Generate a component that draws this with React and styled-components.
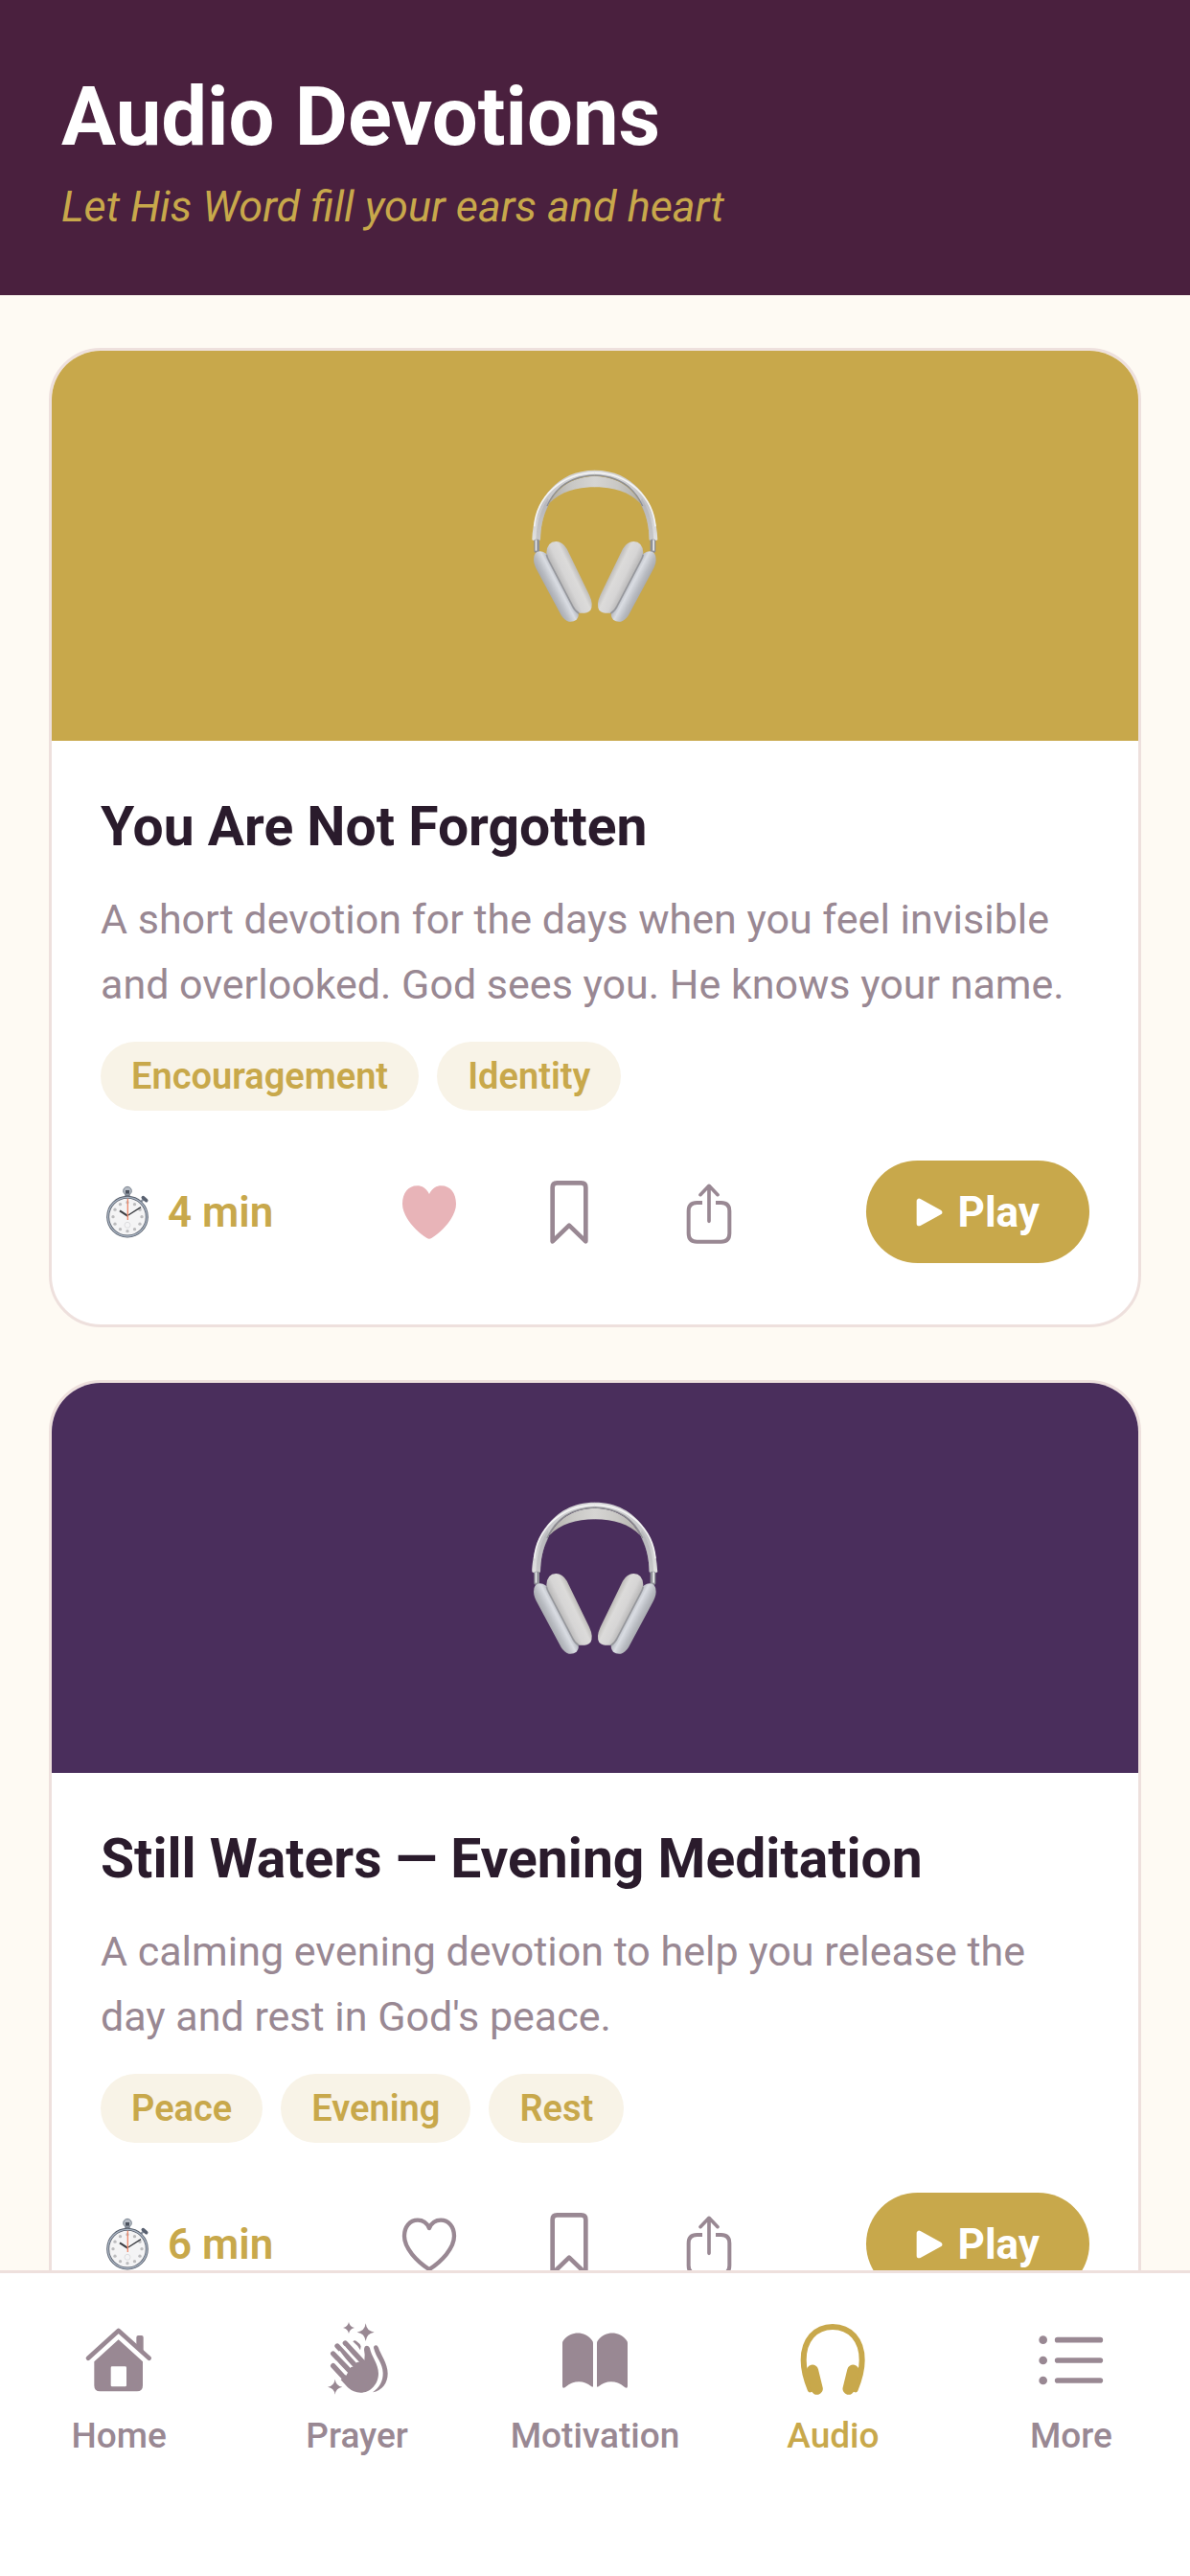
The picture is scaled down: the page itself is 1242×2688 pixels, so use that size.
import React, { useState } from "react";
import styled, { createGlobalStyle } from "styled-components";

const color = {
  plum: "#4a203e",
  gold: "#c8a84b",
  violet: "#4a2e5c",
  cream: "#fefaf3",
  ink: "#2a1b2c",
  muted: "#998893",
  line: "#eee0dd",
  chip: "#f8f3e7",
  rose: "#e8b4b8",
};

const GlobalStyle = createGlobalStyle`
  * { box-sizing: border-box; }
  body { margin: 0; background: ${color.cream}; }
  button { font: inherit; border: 0; padding: 0; background: none; cursor: pointer; }
  h1, h2, p, ul { margin: 0; padding: 0; }
`;

const Screen = styled.div`
  display: flex;
  flex-direction: column;
  height: 100vh;
  background: ${color.cream};
  font-family: Roboto, "Liberation Sans", sans-serif;
`;

const Header = styled.header`
  padding: 72px 64px 66px;
  background: ${color.plum};
`;

const PageTitle = styled.h1`
  color: #fff;
  font-size: 85px;
  line-height: 100px;
  font-weight: 700;
`;

const Tagline = styled.p`
  margin-top: 18px;
  color: ${color.gold};
  font-size: 45px;
  line-height: 52px;
  font-style: italic;
`;

const Feed = styled.main`
  flex: 1;
  min-height: 0;
  overflow-y: auto;
  scrollbar-width: none;
  display: flex;
  flex-direction: column;
  gap: 55px;
  padding: 55px 51px;
`;

const Card = styled.article`
  flex: none;
  overflow: hidden;
  border: 3px solid ${color.line};
  border-radius: 54px;
  background: #fff;
`;

const Cover = styled.div`
  display: flex;
  align-items: center;
  justify-content: center;
  height: 407px;
  background: ${(p) => p.$tone};
`;

const Body = styled.div`
  padding: 54px 51px 64px;
`;

const CardTitle = styled.h2`
  color: ${color.ink};
  font-size: 57px;
  line-height: 72px;
  font-weight: 700;
`;

const Summary = styled.p`
  margin-top: 26px;
  color: ${color.muted};
  font-size: 43px;
  line-height: 68px;
`;

const Chips = styled.ul`
  display: flex;
  flex-wrap: wrap;
  gap: 19px;
  margin-top: 26px;
  list-style: none;
`;

const Chip = styled.li`
  padding: 0 32px;
  border-radius: 36px;
  background: ${color.chip};
  color: ${color.gold};
  font-size: 38px;
  line-height: 72px;
  font-weight: 600;
`;

const Footer = styled.div`
  display: flex;
  align-items: center;
  justify-content: space-between;
  margin-top: 52px;
`;

const Duration = styled.span`
  display: flex;
  align-items: center;
  gap: 18px;
  padding-left: 4px;
  color: ${color.gold};
  font-size: 44px;
  line-height: 52px;
  font-weight: 600;
`;

const Actions = styled.div`
  display: flex;
  gap: 76px;
`;

const IconButton = styled.button`
  display: flex;
  width: 70px;
  height: 70px;
  color: ${color.muted};
`;

const PlayButton = styled.button`
  && {
    display: flex;
    align-items: center;
    gap: 16px;
    height: 107px;
    padding: 0 52px;
    border-radius: 54px;
    background: ${color.gold};
    color: #fff;
    font-size: 44px;
    font-weight: 700;
  }
`;

const TabBar = styled.nav`
  display: flex;
  flex: none;
  height: 319px;
  padding-top: 50px;
  border-top: 3px solid ${color.line};
  background: #fff;
`;

const Tab = styled.a`
  flex: 1;
  display: flex;
  flex-direction: column;
  align-items: center;
  gap: 20px;
  color: ${(p) => (p.$active ? color.gold : color.muted)};
  font-size: 37px;
  line-height: 44px;
  font-weight: 500;
  text-decoration: none;
`;

/* ---------- drawings ---------- */

function HeadphonesArt() {
  const half = (
    <g>
      <path d="M103 310 C105 215 160 92 300 92 V108 C225 110 178 145 152 205 C136 240 130 270 129 310 Q116 318 103 310Z" fill="url(#hp-band)" />
      <path d="M150 214 C136 240 130 270 129 310 Q121 315 115 313 C117 260 126 226 152 180 Q160 190 150 214Z" fill="#a9a9ac" opacity=".45" />
      <path d="M157 196 C180 150 225 112 300 110 V145 C240 145 192 160 157 196Z" fill="url(#hp-mesh)" />
      <path d="M110 268 C118 180 190 101 300 100" fill="none" stroke="#f4f4f4" strokeWidth="5" />
      <path d="M150 204 C178 142 225 110 300 108" fill="none" stroke="#8d8e92" strokeWidth="4" />
      <rect x="109" y="308" width="17" height="42" rx="5" fill="#8e9096" />
      <rect x="113" y="310" width="5" height="34" fill="#e9eaec" />
      <path d="M108 372 Q108 346 128 346 Q146 347 160 368 L244 525 Q254 548 242 560 Q232 568 218 566 Q204 562 194 546 L122 412 Q108 388 108 372Z" fill="url(#hp-cup)" />
      <path d="M148 350 Q150 316 178 315 Q198 315 212 338 L282 482 Q296 512 286 530 Q274 542 250 539 Q238 534 230 518 L156 376 Q148 362 148 350Z" fill="url(#hp-pad)" />
      <path d="M148 356 Q150 366 156 376 L230 518 Q236 532 250 540" fill="none" stroke="#85868c" strokeWidth="5" opacity=".7" />
    </g>
  );
  return (
    <svg width="134" height="160" viewBox="99 90 402 480" aria-hidden="true">
      <defs>
        <linearGradient id="hp-band" x1="0" y1="0" x2="0" y2="1">
          <stop offset="0" stopColor="#d6d6d8" />
          <stop offset=".5" stopColor="#c4c4c7" />
          <stop offset="1" stopColor="#e3e3e2" />
        </linearGradient>
        <linearGradient id="hp-mesh" x1="0" y1="0" x2="1" y2="0">
          <stop offset="0" stopColor="#b0aea9" />
          <stop offset=".5" stopColor="#c9c8c5" />
          <stop offset="1" stopColor="#d6d5d3" />
        </linearGradient>
        <linearGradient id="hp-cup" gradientUnits="userSpaceOnUse" x1="153" y1="470" x2="205" y2="443">
          <stop offset="0" stopColor="#a9abb0" />
          <stop offset=".25" stopColor="#b9bcc2" />
          <stop offset=".6" stopColor="#dadde3" />
          <stop offset="1" stopColor="#a2a5ad" />
        </linearGradient>
        <linearGradient id="hp-pad" gradientUnits="userSpaceOnUse" x1="190" y1="441" x2="247" y2="413">
          <stop offset="0" stopColor="#b9b8b8" />
          <stop offset=".35" stopColor="#d6d5d5" />
          <stop offset=".75" stopColor="#dcdbda" />
          <stop offset="1" stopColor="#c0bebb" />
        </linearGradient>
      </defs>
      {half}
      <g transform="translate(599 0) scale(-1 1)">{half}</g>
    </svg>
  );
}

function Stopwatch() {
  const ticks = Array.from({ length: 12 }, (_, i) => (i * Math.PI) / 6);
  return (
    <svg width="48" height="56" viewBox="88 164 144 168" aria-hidden="true">
      <rect x="152" y="182" width="16" height="20" fill="#6f7886" />
      <circle cx="160" cy="181" r="13" fill="#b4bac3" stroke="#7c8591" strokeWidth="3" />
      <path d="M154 179h12v11h-12z" fill="#4c525e" />
      <path d="M200 216 L211 207" stroke="#8d96a3" strokeWidth="7" />
      <path d="M209 202 L219 211" stroke="#596170" strokeWidth="11" strokeLinecap="round" />
      <circle cx="160" cy="262" r="61" fill="#f4f4f5" stroke="#5a616d" strokeWidth="9" />
      <circle cx="160" cy="262" r="61" fill="none" stroke="#a9b4c3" strokeWidth="4" />
      {ticks.map((t) => (
        <circle key={t} cx={160 + 45 * Math.sin(t)} cy={262 - 45 * Math.cos(t)} r="5" fill="#bcbcbe" />
      ))}
      <circle cx="160" cy="288" r="9" fill="none" stroke="#dddddf" strokeWidth="3" />
      <path d="M160 259 L136 243" stroke="#3b3d42" strokeWidth="6" />
      <path d="M158 260 L202 232" stroke="#3b3d42" strokeWidth="4" />
      <path d="M161 205 V272" stroke="#ee8a6c" strokeWidth="4" />
    </svg>
  );
}

function Heart({ filled }) {
  return filled ? (
    <svg width="70" height="70" viewBox="46 145 210 210" aria-hidden="true">
      <path
        fill={color.rose}
        d="M151 193 C142 174 128 167 113 167 C85 167 67 190 67 224 C67 264 108 308 144 331 Q151 336 158 331 C194 308 235 264 235 224 C235 190 217 167 189 167 C174 167 160 174 151 193Z"
      />
    </svg>
  ) : (
    <svg width="70" height="70" viewBox="46 145 210 210" aria-hidden="true">
      <path
        fill="none"
        stroke="currentColor"
        strokeWidth="13"
        strokeLinejoin="round"
        d="M151 199 C143 181 130 174 115 174 C90 174 73 195 73 224 C73 262 112 303 151 328 C190 303 229 262 229 224 C229 195 212 174 187 174 C172 174 159 181 151 199Z"
      />
    </svg>
  );
}

function Bookmark() {
  return (
    <svg width="70" height="70" viewBox="485 145 210 210" aria-hidden="true">
      <path
        fill="none"
        stroke="currentColor"
        strokeWidth="14"
        strokeLinejoin="round"
        d="M538 341 V172 Q538 158 552 158 H628 Q642 158 642 172 V341 L590 291Z"
      />
    </svg>
  );
}

function Share() {
  return (
    <svg width="70" height="70" viewBox="920 145 210 210" aria-hidden="true">
      <g fill="none" stroke="currentColor" strokeWidth="12">
        <path d="M1004 220 H987 Q961 220 961 246 V316 Q961 342 987 342 H1063 Q1089 342 1089 316 V246 Q1089 220 1063 220 H1046" />
        <path d="M1025 278 V168 M998 195 L1025 167 L1052 195" strokeLinecap="round" strokeLinejoin="round" strokeWidth="11" />
      </g>
    </svg>
  );
}

function PlayGlyph() {
  return (
    <svg width="28" height="30" viewBox="299 209 84 90" aria-hidden="true">
      <path d="M309 219 V289 L373 254Z" fill="#fff" stroke="#fff" strokeWidth="16" strokeLinejoin="round" />
    </svg>
  );
}

function Glyph({ left, children }) {
  return (
    <svg width="78" height="78" viewBox={`${left} 158 234 234`} aria-hidden="true">
      {children}
    </svg>
  );
}

const star = (x, y, rx, ry) =>
  `M${x} ${y - ry} Q${x + 3} ${y - 3} ${x + rx} ${y} Q${x + 3} ${y + 3} ${x} ${y + ry} Q${x - 3} ${y + 3} ${x - rx} ${y} Q${x - 3} ${y - 3} ${x} ${y - ry}Z`;

const glyphs = {
  home: (
    <Glyph left={255}>
      <rect x="427" y="203" width="22" height="60" rx="6" fill="currentColor" />
      <path d="M276 275 L371 188 L467 275 L371 250Z" fill="#fff" />
      <path d="M276 274 L371 188 L467 274" fill="none" stroke="currentColor" strokeWidth="14" strokeLinecap="round" strokeLinejoin="round" />
      <path fillRule="evenodd" fill="currentColor" d="M371 216 L447 285 V360 Q447 378 429 378 H313 Q295 378 295 360 V285Z M351 300 Q347 300 347 304 V359 Q347 363 351 363 H392 Q396 363 396 359 V304 Q396 300 392 300Z" />
    </Glyph>
  ),
  prayer: (
    <Glyph left={1001}>
      <path fill="currentColor" d={star(1091, 179, 18, 18)} />
      <path fill="currentColor" d={star(1144, 193, 27, 28)} />
      <path fill="currentColor" d={star(1048, 364, 23, 24)} />
      <path fill="currentColor" d="M1169 242 Q1169 234 1176 234 Q1181 234 1184 241 C1190 261 1213 290 1213 322 C1213 352 1195 376 1166 381 C1187 366 1199 345 1198 320 C1197 288 1177 275 1169 242Z" />
      <path fill="currentColor" d="M1104 222 Q1109 216 1115 221 Q1127 229 1129 237 L1127 249 Q1119 234 1104 222Z" />
      <g stroke="currentColor" strokeWidth="16" strokeLinecap="round">
        <path d="M1042 298 L1090 350" />
        <path d="M1042 260 L1098 318" />
        <path d="M1055 236 L1116 302" />
        <path d="M1080 227 L1140 292" />
      </g>
      <path fill="currentColor" d="M1140 282 Q1143 264 1139 248 Q1139 235 1148 235 Q1155 235 1157 243 C1161 268 1184 292 1184 322 C1184 356 1158 382 1128 382 Q1106 382 1088 366 L1066 342 L1082 325 L1092 318 L1098 302 L1110 300 L1116 287 L1134 285Z" />
      <g stroke="#fff" strokeWidth="5" strokeLinecap="round">
        <path d="M1052 285 L1083 325" />
        <path d="M1062 254 L1096 300" />
        <path d="M1078 239 L1115 285" />
      </g>
    </Glyph>
  ),
  motivation: (
    <Glyph left={396}>
      <path fill="currentColor" d="M411 226 Q411 221 415 217 C439 188 480 188 503 217 Q507 221 507 226 V361 Q507 367 501 362 C478 343 446 343 421 364 Q411 371 411 361Z" />
      <path fill="currentColor" d="M519 226 Q519 221 523 217 C546 188 588 188 611 217 Q615 221 615 226 V361 Q615 371 605 364 C580 343 548 343 525 362 Q519 367 519 361Z" />
    </Glyph>
  ),
  audio: (
    <Glyph left={91}>
      <path d="M138 372 C127 345 117 315 117 280 C117 218 153 176 208 176 C264 176 300 218 300 280 C300 315 290 345 279 372" fill="none" stroke="currentColor" strokeWidth="18" strokeLinecap="round" />
      <g stroke="currentColor" strokeWidth="37" strokeLinecap="round">
        <path d="M145 313 L159 370" />
        <path d="M272 313 L258 370" />
      </g>
    </Glyph>
  ),
  more: (
    <Glyph left={838}>
      {[217, 281, 344].map((y) => (
        <g key={y}>
          <circle cx="867" cy={y} r="13" fill="currentColor" />
          <path d={`M912 ${y} H1046`} stroke="currentColor" strokeWidth="17" strokeLinecap="round" />
        </g>
      ))}
    </Glyph>
  ),
};

/* ---------- content ---------- */

const devotions = [
  {
    id: "forgotten",
    tone: color.gold,
    title: "You Are Not Forgotten",
    summary: "A short devotion for the days when you feel invisible and overlooked. God sees you. He knows your name.",
    tags: ["Encouragement", "Identity"],
    length: "4 min",
    liked: true,
  },
  {
    id: "waters",
    tone: color.violet,
    title: "Still Waters — Evening Meditation",
    summary: "A calming evening devotion to help you release the day and rest in God's peace.",
    tags: ["Peace", "Evening", "Rest"],
    length: "6 min",
    liked: false,
  },
];

const tabs = [
  { id: "home", label: "Home" },
  { id: "prayer", label: "Prayer" },
  { id: "motivation", label: "Motivation" },
  { id: "audio", label: "Audio" },
  { id: "more", label: "More" },
];

function DevotionCard({ item }) {
  const [liked, setLiked] = useState(item.liked);
  return (
    <Card>
      <Cover $tone={item.tone}>
        <HeadphonesArt />
      </Cover>
      <Body>
        <CardTitle>{item.title}</CardTitle>
        <Summary>{item.summary}</Summary>
        <Chips>
          {item.tags.map((tag) => (
            <Chip key={tag}>{tag}</Chip>
          ))}
        </Chips>
        <Footer>
          <Duration>
            <Stopwatch />
            {item.length}
          </Duration>
          <Actions>
            <IconButton aria-label="Like" aria-pressed={liked} onClick={() => setLiked(!liked)}>
              <Heart filled={liked} />
            </IconButton>
            <IconButton aria-label="Save">
              <Bookmark />
            </IconButton>
            <IconButton aria-label="Share">
              <Share />
            </IconButton>
          </Actions>
          <PlayButton>
            <PlayGlyph />
            Play
          </PlayButton>
        </Footer>
      </Body>
    </Card>
  );
}

export default function App() {
  return (
    <Screen>
      <GlobalStyle />
      <Header>
        <PageTitle>Audio Devotions</PageTitle>
        <Tagline>Let His Word fill your ears and heart</Tagline>
      </Header>
      <Feed>
        {devotions.map((item) => (
          <DevotionCard key={item.id} item={item} />
        ))}
      </Feed>
      <TabBar>
        {tabs.map((tab) => (
          <Tab key={tab.id} href={`#${tab.id}`} $active={tab.id === "audio"}>
            {glyphs[tab.id]}
            {tab.label}
          </Tab>
        ))}
      </TabBar>
    </Screen>
  );
}
